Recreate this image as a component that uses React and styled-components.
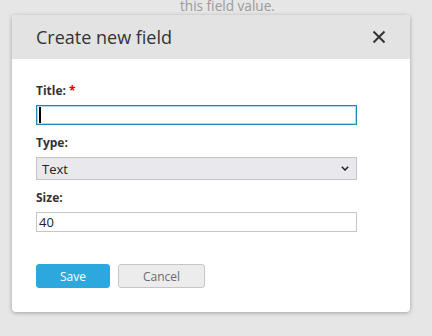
import React from 'react'
import styled, { createGlobalStyle } from 'styled-components'

const GlobalStyle = createGlobalStyle`
  html, body {
    margin: 0;
    padding: 0;
    background: #e6e6e6;
    font-family: 'Open Sans', 'Noto Sans', Arial, sans-serif;
    overflow: hidden;
  }
`

const Page = styled.div`
  width: 432px;
  height: 336px;
  overflow: hidden;
`

const PageText = styled.p`
  margin: -3px 0 0 180px;
  font-size: 13.6px;
  line-height: 18px;
  color: #9a9a9a;
`

const Dialog = styled.div`
  width: 398px;
  margin-left: 12px;
  background: #fff;
  border-radius: 4px;
  overflow: hidden;
  box-shadow: 0 1px 4px rgba(0, 0, 0, 0.3);
`

const Header = styled.div`
  height: 44px;
  display: flex;
  align-items: center;
  justify-content: space-between;
  padding: 0 24px;
  background: #e3e3e3;
`

const Title = styled.h2`
  margin: 0;
  font-size: 18px;
  font-weight: 400;
  color: #333;
`

const Close = styled.button`
  border: 0;
  padding: 0;
  background: none;
  width: 14px;
  height: 14px;
  display: flex;
  cursor: pointer;
`

const Body = styled.div`
  padding: 24px 24px 24px;
`

const Field = styled.div`
  width: 321px;
  margin-bottom: ${(p) => p.$gap ?? 10}px;
`

const Label = styled.label`
  display: block;
  font-size: 12px;
  line-height: 16px;
  font-weight: 700;
  color: #333;
  margin-bottom: 6px;
`

const Required = styled.span`
  color: #e00;
  margin-left: 3px;
`

const TextBox = styled.div`
  box-sizing: border-box;
  height: 20px;
  display: flex;
  align-items: center;
  padding-left: 2px;
  border: 1px solid #2787b3;
  box-shadow: inset 0 0 0 1px rgba(39, 135, 179, 0.35);
  background: #fff;
`

const Caret = styled.span`
  width: 1.5px;
  height: 16px;
  background: #000;
`

const Input = styled.input`
  box-sizing: border-box;
  display: block;
  width: 100%;
  height: 20px;
  margin: 0;
  padding: 0 2px;
  border: 1px solid #c6c6c6;
  font: 13px 'Open Sans', sans-serif;
  color: #222;
  outline: none;
`

const Select = styled.div`
  box-sizing: border-box;
  height: 23px;
  display: flex;
  align-items: center;
  justify-content: space-between;
  padding: 0 6px 0 5px;
  border: 1px solid #c4c4c4;
  background: #e9e9ed;
  font-size: 13px;
  color: #222;
`

const Actions = styled.div`
  display: flex;
  gap: 8px;
  margin-top: 32px;
`

const Button = styled.button`
  box-sizing: border-box;
  height: 24px;
  width: ${(p) => p.$width}px;
  border-radius: 3px;
  font: 12px 'Open Sans', sans-serif;
  padding: 0;
  cursor: pointer;
  border: 1px solid ${(p) => (p.$primary ? '#2ca8df' : '#c6c6c6')};
  background: ${(p) => (p.$primary ? '#2ca8df' : '#ececec')};
  color: ${(p) => (p.$primary ? '#fff' : '#6b6b6b')};
`

export default function App() {
  return (
    <Page>
      <GlobalStyle />
      <PageText>this field value.</PageText>
      <Dialog>
        <Header>
          <Title>Create new field</Title>
          <Close aria-label="Close">
            <svg width="14" height="14" viewBox="0 0 14 14">
              <path d="M1.5 1.5 L12.5 12.5 M12.5 1.5 L1.5 12.5" stroke="#333" strokeWidth="2" />
            </svg>
          </Close>
        </Header>
        <Body>
          <Field>
            <Label>
              Title:<Required>*</Required>
            </Label>
            <TextBox role="textbox">
              <Caret />
            </TextBox>
          </Field>
          <Field>
            <Label>Type:</Label>
            <Select role="combobox">
              <span>Text</span>
              <svg width="8" height="5" viewBox="0 0 8 5" style={{ marginRight: 1 }}>
                <path d="M0.8 0.8 L4 4 L7.2 0.8" fill="none" stroke="#222" strokeWidth="1.5" />
              </svg>
            </Select>
          </Field>
          <Field $gap={0}>
            <Label>Size:</Label>
            <Input defaultValue="40" />
          </Field>
          <Actions>
            <Button $primary $width={74}>Save</Button>
            <Button $width={87}>Cancel</Button>
          </Actions>
        </Body>
      </Dialog>
    </Page>
  )
}
